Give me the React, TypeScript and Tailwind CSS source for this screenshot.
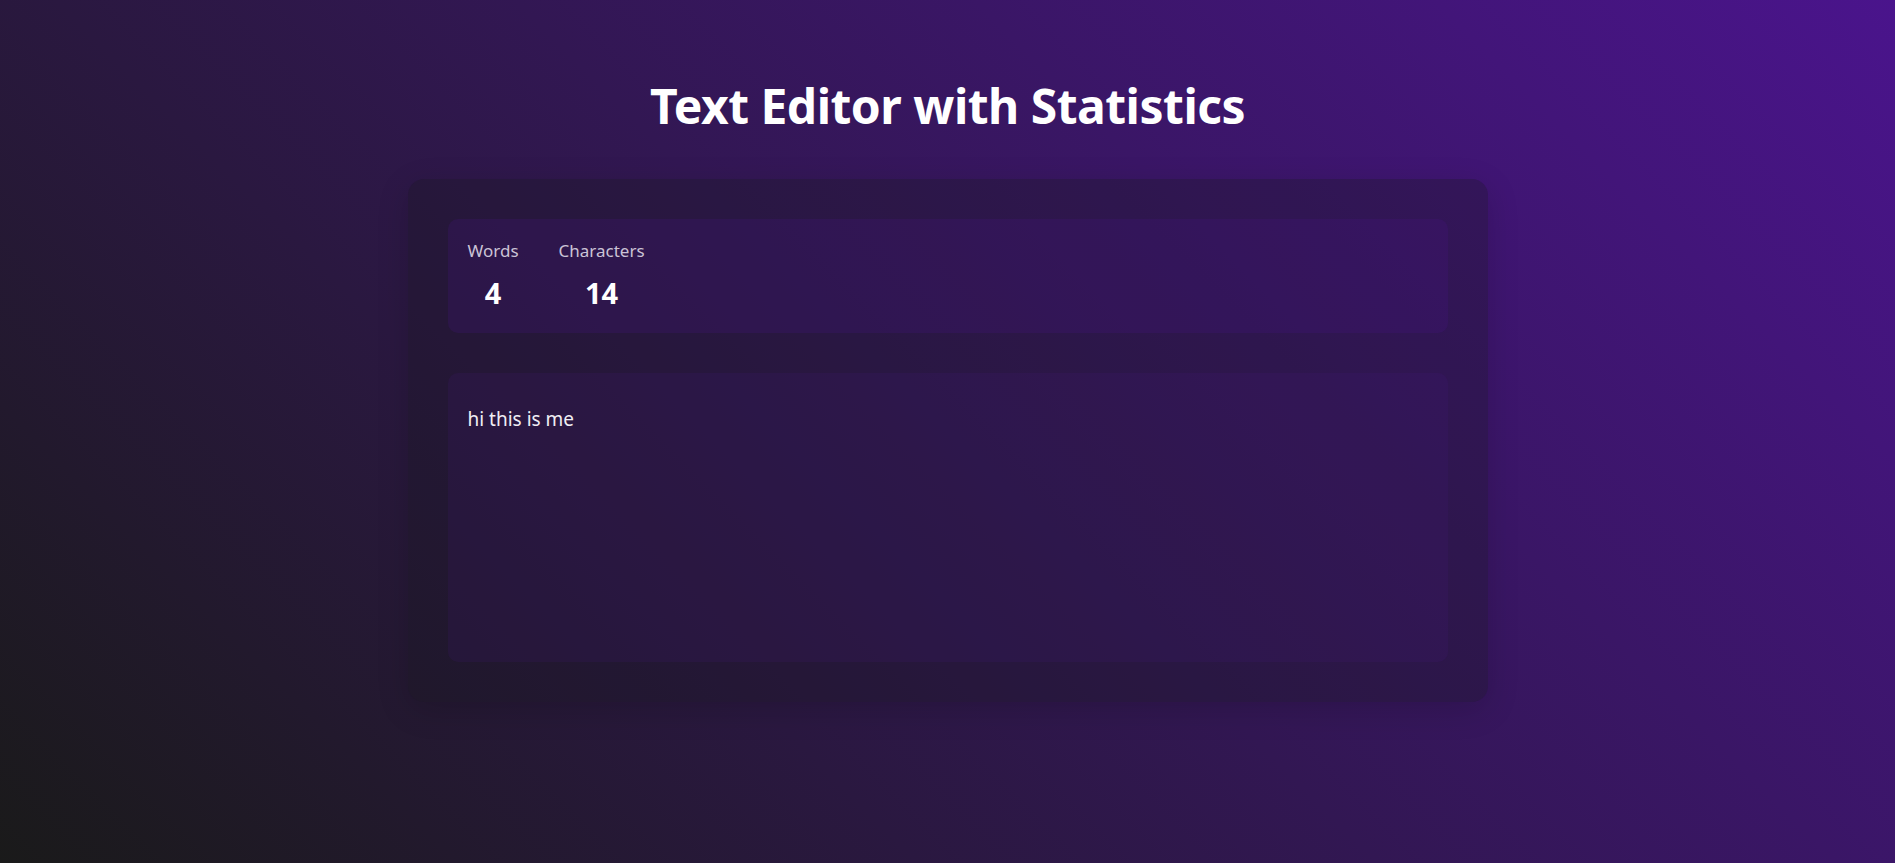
import React, { useState } from "react";

export default function App() {
  const [text, setText] = useState("hi this is me ");
  const words = text.split(/\s+/).filter((w) => w.length > 0).length;
  const chars = text.length;

  return (
    <div
      className="min-h-screen w-full bg-[linear-gradient(45deg,#1a1a1a,#4a148c)] flex flex-col items-center pt-[70px] pb-10"
      style={{ fontFamily: '"Noto Sans", "Open Sans", sans-serif' }}
    >
      <h1 className="text-white font-bold text-[48px] leading-[72px] tracking-[-0.5px]">
        Text Editor with Statistics
      </h1>
      <div className="mt-[37px] w-[1080px] rounded-2xl bg-[rgba(22,22,30,0.3)] p-10 shadow-[0_8px_32px_rgba(0,0,0,0.15)] flex flex-col gap-10">
        <div className="rounded-[10px] bg-[rgba(74,20,140,0.2)] h-[114px] px-5 pt-[20px] flex gap-10">
          <div className="flex flex-col items-center">
            <span className="text-[17px] leading-6 text-[#cbc3d6]">Words</span>
            <span className="text-[29px] leading-[40px] font-bold text-white mt-[10px]">{words}</span>
          </div>
          <div className="flex flex-col items-center">
            <span className="text-[17px] leading-6 text-[#cbc3d6]">Characters</span>
            <span className="text-[29px] leading-[40px] font-bold text-white mt-[10px]">{chars}</span>
          </div>
        </div>
        <textarea
          value={text}
          onChange={(e) => setText(e.target.value)}
          spellCheck={false}
          className="h-[289px] w-full resize-none rounded-[10px] bg-[rgba(74,20,140,0.13)] px-5 pt-[32px] text-[19px] leading-[28px] text-[#f0eef4] outline-none border-none"
          style={{ fontFamily: '"Noto Sans", "Open Sans", sans-serif' }}
        />
      </div>
    </div>
  );
}
